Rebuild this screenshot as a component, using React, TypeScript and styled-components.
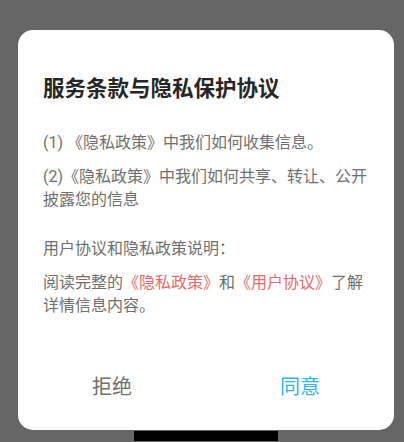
import React from 'react';
import styled, { createGlobalStyle } from 'styled-components';

const GlobalStyle = createGlobalStyle`
  html, body {
    margin: 0;
    padding: 0;
    background-color: #666666;
    font-family: Roboto, "Noto Sans CJK SC", sans-serif;
  }
`;

// Full-screen dimmed backdrop
const Screen = styled.div`
  width: 404px;
  height: 442px;
  box-sizing: border-box;
  padding: 30px 0 0 18px;
  background-color: #666666;
  overflow: hidden;
`;

const Column = styled.div`
  width: 376px;
  display: flex;
  flex-direction: column;
  align-items: center;
`;

// Dialog card
const Dialog = styled.div`
  width: 100%;
  box-sizing: border-box;
  height: 400px;
  background-color: #ffffff;
  border-radius: 15px;
  padding: 44px 25px 0;
  display: flex;
  flex-direction: column;
`;

const Title = styled.h2`
  margin: 0;
  font-size: 21.5px;
  line-height: 30px;
  font-weight: 700;
  color: #262626;
`;

const Body = styled.div`
  margin-top: 27px;
`;

const Paragraph = styled.p<{ $gap: number }>`
  margin: ${({ $gap }) => $gap}px 0 0;
  font-size: 16px;
  line-height: 23px;
  color: #707070;
`;

const Link = styled.span`
  color: #e86b6b;
`;

const Actions = styled.div`
  margin-top: auto;
  margin-left: -25px;
  margin-right: -25px;
  height: 50px;
  margin-bottom: 20px;
  display: grid;
  grid-template-columns: 1fr 1fr;
`;

const ActionButton = styled.button<{ $primary?: boolean }>`
  border: none;
  background: transparent;
  padding: 0;
  font-family: inherit;
  font-size: 20px;
  color: ${({ $primary }) => ($primary ? '#33b5e5' : '#707070')};
  cursor: pointer;
`;

// Navigation handle peeking below the dialog
const Handle = styled.div`
  width: 144px;
  height: 10px;
  margin-top: 1px;
  background-color: #000000;
`;

export default function App() {
  return (
    <>
      <GlobalStyle />
      <Screen>
        <Column>
          <Dialog>
            <Title>服务条款与隐私保护协议</Title>
            <Body>
              <Paragraph $gap={0}>(1) 《隐私政策》中我们如何收集信息。</Paragraph>
              <Paragraph $gap={11}>(2)《隐私政策》中我们如何共享、转让、公开披露您的信息</Paragraph>
              <Paragraph $gap={26}>用户协议和隐私政策说明：</Paragraph>
              <Paragraph $gap={11}>
                阅读完整的<Link>《隐私政策》</Link>和<Link>《用户协议》</Link>了解详情信息内容。
              </Paragraph>
            </Body>
            <Actions>
              <ActionButton>拒绝</ActionButton>
              <ActionButton $primary>同意</ActionButton>
            </Actions>
          </Dialog>
          <Handle />
        </Column>
      </Screen>
    </>
  );
}
